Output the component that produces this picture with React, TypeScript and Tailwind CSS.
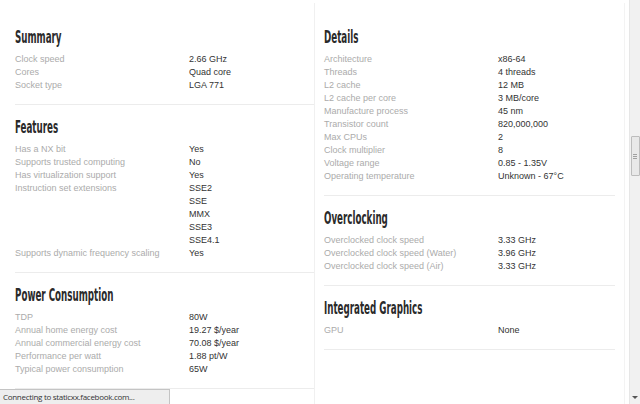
import React from "react";

type Row = [string, string | string[]];

interface Section {
  title: string;
  rows: Row[];
}

const leftSections: Section[] = [
  {
    title: "Summary",
    rows: [
      ["Clock speed", "2.66 GHz"],
      ["Cores", "Quad core"],
      ["Socket type", "LGA 771"],
    ],
  },
  {
    title: "Features",
    rows: [
      ["Has a NX bit", "Yes"],
      ["Supports trusted computing", "No"],
      ["Has virtualization support", "Yes"],
      ["Instruction set extensions", ["SSE2", "SSE", "MMX", "SSE3", "SSE4.1"]],
      ["Supports dynamic frequency scaling", "Yes"],
    ],
  },
  {
    title: "Power Consumption",
    rows: [
      ["TDP", "80W"],
      ["Annual home energy cost", "19.27 $/year"],
      ["Annual commercial energy cost", "70.08 $/year"],
      ["Performance per watt", "1.88 pt/W"],
      ["Typical power consumption", "65W"],
    ],
  },
];

const rightSections: Section[] = [
  {
    title: "Details",
    rows: [
      ["Architecture", "x86-64"],
      ["Threads", "4 threads"],
      ["L2 cache", "12 MB"],
      ["L2 cache per core", "3 MB/core"],
      ["Manufacture process", "45 nm"],
      ["Transistor count", "820,000,000"],
      ["Max CPUs", "2"],
      ["Clock multiplier", "8"],
      ["Voltage range", "0.85 - 1.35V"],
      ["Operating temperature", "Unknown - 67°C"],
    ],
  },
  {
    title: "Overclocking",
    rows: [
      ["Overclocked clock speed", "3.33 GHz"],
      ["Overclocked clock speed (Water)", "3.96 GHz"],
      ["Overclocked clock speed (Air)", "3.33 GHz"],
    ],
  },
  {
    title: "Integrated Graphics",
    rows: [["GPU", "None"]],
  },
];

function SpecSection({ section }: { section: Section }) {
  return (
    <div className="pt-[12px] pb-[12px] border-b border-[#ececec]">
      <h2 className="h-[20px] leading-[20px] mb-[6px] text-[17px] font-bold text-[#2a2a2a] font-['DejaVu_Sans_Condensed',sans-serif]">
        <span className="inline-block origin-left scale-x-[0.57]">{section.title}</span>
      </h2>
      <div className="text-[9px] leading-[13px] font-['Liberation_Sans',Arial,sans-serif]">
        {section.rows.map(([label, value]) => (
          <div key={label} className="flex">
            <div className="w-[174px] shrink-0 text-[#ababab]">{label}</div>
            <div className="text-[#333]">
              {Array.isArray(value) ? value.map((v) => <div key={v}>{v}</div>) : value}
            </div>
          </div>
        ))}
      </div>
    </div>
  );
}

export default function App() {
  return (
    <div className="relative w-[640px] h-[404px] overflow-hidden bg-white flex">
      <div className="flex-1 flex pt-[3px]">
        <div className="w-[315px] pl-[15px] border-r border-[#f0f0f0] pt-[12px]">
          {leftSections.map((s) => (
            <SpecSection key={s.title} section={s} />
          ))}
        </div>
        <div className="w-[310px] pl-[9px] pr-[9px] border-r border-[#f3f3f3] pt-[12px]">
          {rightSections.map((s) => (
            <SpecSection key={s.title} section={s} />
          ))}
        </div>
      </div>

      {/* scrollbar */}
      <div className="w-[11px] bg-[#f1f1f1] border-l border-[#e6e6e6] flex flex-col items-center">
        <div className="mt-[136px] w-[9px] h-[40px] bg-[#e9e9e9] border border-[#bdbdbd] rounded-[1px] flex flex-col items-center justify-center gap-[1px]">
          <div className="w-[4px] h-px bg-[#a0a0a0]" />
          <div className="w-[4px] h-px bg-[#a0a0a0]" />
          <div className="w-[4px] h-px bg-[#a0a0a0]" />
        </div>
        <div className="mt-auto mb-[5px] w-0 h-0 border-l-[3px] border-r-[3px] border-t-[3px] border-l-transparent border-r-transparent border-t-[#555]" />
      </div>

      {/* status bar */}
      <div className="absolute left-0 bottom-0 w-[170px] h-[15px] bg-[#eeeeee] border-t border-r border-[#c4c4c4] pl-[3px] text-[8px] tracking-[-0.3px] leading-[14px] text-[#333] font-['Open_Sans',sans-serif]">
        Connecting to staticxx.facebook.com...
      </div>
    </div>
  );
}
